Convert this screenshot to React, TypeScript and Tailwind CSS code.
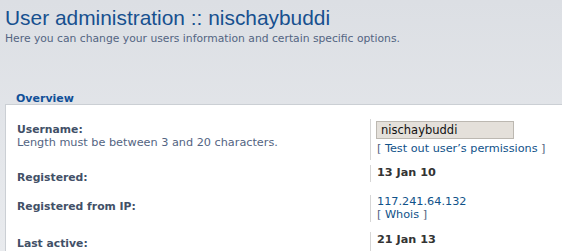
import React from 'react';

const BODY = "font-['DejaVu_Sans','Noto_Sans',sans-serif]";

function Row({ className = '', label, labelPad, desc, children, ddClass }: { className?: string; label: string; labelPad: string; desc?: string; children: React.ReactNode; ddClass: string }) {
  return (
    <div className={`flex items-start ${className}`}>
      <div className={`w-[364px] shrink-0 pl-[11px] ${labelPad}`}>
        <div className="text-[10.8px] leading-[13px] font-bold text-[#425067]">{label}</div>
        {desc && <div className="text-[11.25px] leading-[13px] text-[#536482]">{desc}</div>}
      </div>
      <div className={`border-l border-[#d6d6d6] pl-[6px] ${ddClass}`}>{children}</div>
    </div>
  );
}

export default function App() {
  return (
    <div className={`w-[562px] h-[251px] overflow-hidden bg-gradient-to-b from-[#dcdfe4] to-[#e9ebee] ${BODY}`}>
      <header className="pl-[5px] pt-[5px]">
        <h1 className="font-['Liberation_Sans',Arial,sans-serif] text-[20.9px] leading-[26px] text-[#17508f] whitespace-nowrap">User administration :: nischaybuddi</h1>
        <p className="mt-[1px] text-[10.75px] leading-[14px] text-[#536482] whitespace-nowrap">Here you can change your users information and certain specific options.</p>
      </header>

      <div className="mt-[48px] pl-[16px] text-[11px] leading-[10px] font-bold text-[#115098]">Overview</div>

      <div className="ml-[5px] border-l border-t border-[#cbcfd4] bg-white h-[160px]">
        <Row className="mt-[14px]" label="Username:" labelPad="pt-[4px]" desc="Length must be between 3 and 20 characters." ddClass="pt-[2px] pb-[4px]">
          <input readOnly defaultValue="nischaybuddi"
            className="-ml-px block w-[138px] h-[18px] pl-[4px] bg-[#e4e0da] border border-[#bcb8b1] text-[11.5px] text-[#111] outline-none" />
          <div className="mt-[3px] text-[11.25px] leading-[14px] text-[#536482] whitespace-nowrap">[ <a className="text-[#105289]">Test out user’s permissions</a> ]</div>
        </Row>

        <Row className="mt-[5px]" label="Registered:" labelPad="pt-[6px]" ddClass="pt-[1px] pb-[2px]">
          <div className="text-[11.25px] leading-[14px] font-bold text-[#333]">13 Jan 10</div>
        </Row>

        <Row className="mt-[11px]" label="Registered from IP:" labelPad="pt-[5px]" ddClass="pb-[1px]">
          <div className="text-[11.25px] leading-[13px] text-[#105289]">117.241.64.132</div>
          <div className="text-[11.25px] leading-[13px] text-[#536482]">[ <a className="text-[#105289]">Whois</a> ]</div>
        </Row>

        <Row className="mt-[10px]" label="Last active:" labelPad="pt-[5px]" ddClass="pt-[1px] pb-[4px]">
          <div className="text-[11.25px] leading-[14px] font-bold text-[#333]">21 Jan 13</div>
        </Row>
      </div>
    </div>
  );
}
